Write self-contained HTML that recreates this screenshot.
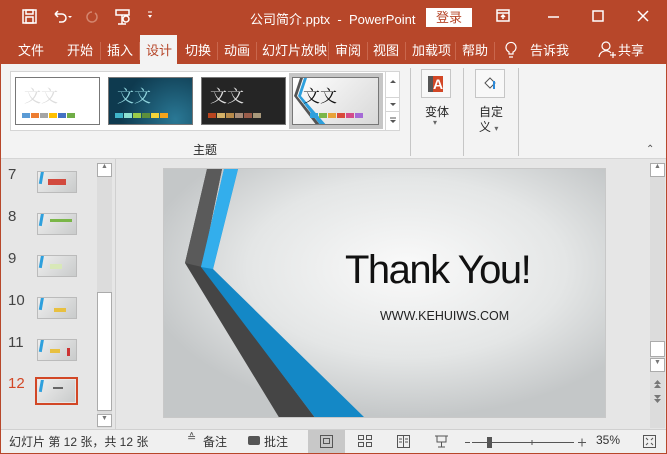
<!DOCTYPE html>
<html><head><meta charset="utf-8"><style>
*{margin:0;padding:0;box-sizing:border-box}
body{width:667px;height:454px;overflow:hidden;position:relative;background:#e6e6e6;font-family:"Liberation Sans","Noto Sans CJK SC",sans-serif;color:#262626}
.a{position:absolute}
.t{font-size:13px;color:#fff;white-space:nowrap}
.tab{position:absolute;top:40px;font-size:13px;color:#fff;white-space:nowrap}
.sep{position:absolute;top:42px;width:1px;height:18px;background:#c9674d}
.th{position:absolute;top:77px;height:48px;width:85px;border:1px solid #777}
.sw{position:absolute;bottom:6px;height:5px;width:8px}
.num{position:absolute;left:8px;font-size:15px;color:#444}
.thumb{position:absolute;left:37px;width:40px;height:22px;border:1px solid #bbb;background:linear-gradient(135deg,#eee,#c9cbcb);overflow:hidden}
.thumb:before{content:"";position:absolute;left:2px;top:-2px;width:3px;height:14px;background:#2ea0dd;transform:rotate(10deg)}
.sb{position:absolute;border:1px solid #ababab;background:#fff}
</style></head><body>
<div class="a" style="left:0;top:0;width:667px;height:64px;background:#b7472a"></div>
<svg class="a" style="left:0;top:0" width="667" height="34">
<g fill="none" stroke="#fff" stroke-width="1.5">
<rect x="23" y="10" width="13" height="13"/><rect x="26" y="10" width="7" height="4"/><rect x="26" y="17" width="7" height="6"/>
<path d="M55 14h7a4 4 0 0 1 0 8h-3M55 14l3-3M55 14l3 3"/>
<path d="M92 12a5 5 0 1 0 3 1" stroke="#d4866f"/>
<rect x="116" y="10" width="13" height="5"/><path d="M122 15v9M118 24h8"/><circle cx="126" cy="19" r="3"/>
<rect x="497" y="10" width="12" height="11"/><path d="M497 13h12M503 19v-4M501 17l2-2 2 2"/>
<path d="M548 17h11"/><rect x="593" y="11" width="10" height="10"/><path d="M638 11l10 10M648 11l-10 10"/>
</g>
<path d="M68 16l2 2 2-2z M148 15l2 3 2-3z" fill="#fff"/><path d="M148 12h4" stroke="#fff"/>
</svg>
<div class="a t" style="left:250px;top:9px">公司简介.pptx&nbsp; - &nbsp;PowerPoint</div>
<div class="a" style="left:426px;top:8px;width:46px;height:19px;background:#fff;color:#b7472a;font-size:13px;text-align:center;line-height:19px">登录</div>
<div class="a" style="left:140px;top:35px;width:37px;height:29px;background:#f3f3f3"></div>
<div class="tab" style="left:18px">文件</div>
<div class="tab" style="left:67px">开始</div><div class="sep" style="left:100px"></div>
<div class="tab" style="left:107px">插入</div><div class="sep" style="left:139px"></div>
<div class="tab" style="left:146px;color:#b7472a">设计</div>
<div class="tab" style="left:185px">切换</div><div class="sep" style="left:217px"></div>
<div class="tab" style="left:224px">动画</div><div class="sep" style="left:256px"></div>
<div class="tab" style="left:262px">幻灯片放映</div><div class="sep" style="left:328px"></div>
<div class="tab" style="left:335px">审阅</div><div class="sep" style="left:367px"></div>
<div class="tab" style="left:373px">视图</div><div class="sep" style="left:405px"></div>
<div class="tab" style="left:412px">加载项</div><div class="sep" style="left:455px"></div>
<div class="tab" style="left:462px">帮助</div><div class="sep" style="left:494px"></div>
<svg class="a" style="left:500px;top:40px" width="140" height="20"><g fill="none" stroke="#fff" stroke-width="1.2"><path d="M9 14v-2a5 5 0 1 1 4 0v2zM9 17h4"/><circle cx="106" cy="6" r="4"/><path d="M99 17a7 7 0 0 1 12-4M110 15h6M113 12v6"/></g></svg>
<div class="tab" style="left:530px">告诉我</div>
<div class="tab" style="left:618px">共享</div>
<div class="a" style="left:0;top:64px;width:667px;height:95px;background:#f3f3f3;border-bottom:1px solid #d5d5d5"></div>
<div class="a" style="left:10px;top:71px;width:390px;height:60px;border:1px solid #d5d5d5;background:#fff"></div>
<div class="th" style="left:15px;background:#fff"><span class="a" style="left:8px;top:4px;font-size:17px;color:#ddd;font-family:'Noto Serif CJK SC',serif">文文</span>
<i class="sw" style="left:6px;background:#5b9bd5"></i><i class="sw" style="left:15px;background:#ed7d31"></i><i class="sw" style="left:24px;background:#a5a5a5"></i><i class="sw" style="left:33px;background:#ffc000"></i><i class="sw" style="left:42px;background:#4472c4"></i><i class="sw" style="left:51px;background:#70ad47"></i></div>
<div class="th" style="left:108px;background:radial-gradient(circle at 80% 90%,#2a7895,#0e3a4f 70%)"><span class="a" style="left:8px;top:4px;font-size:17px;color:#8fd3dc;font-family:'Noto Serif CJK SC',serif">文文</span>
<i class="sw" style="left:6px;background:#3fb4c8"></i><i class="sw" style="left:15px;background:#8de0d0"></i><i class="sw" style="left:24px;background:#9ccc48"></i><i class="sw" style="left:33px;background:#5d8f3c"></i><i class="sw" style="left:42px;background:#f3d33a"></i><i class="sw" style="left:51px;background:#f4a41c"></i></div>
<div class="th" style="left:201px;background:#252525"><span class="a" style="left:8px;top:4px;font-size:17px;color:#ddd;font-family:'Noto Serif CJK SC',serif">文文</span>
<i class="sw" style="left:6px;background:#b8441e"></i><i class="sw" style="left:15px;background:#d4b066"></i><i class="sw" style="left:24px;background:#b88a4a"></i><i class="sw" style="left:33px;background:#a88c78"></i><i class="sw" style="left:42px;background:#9a5c4a"></i><i class="sw" style="left:51px;background:#a8987a"></i></div>
<div class="a" style="left:289px;top:73px;width:94px;height:56px;background:#c6c6c6"></div>
<div class="th" style="left:292px;width:87px;background:linear-gradient(135deg,#fff,#d8d8d8);overflow:hidden">
<svg class="a" style="left:0;top:0" width="87" height="48"><path d="M7 0h3L4 18 28 48h-4L1 18z" fill="#555"/><path d="M11 0h3L8 18 34 48h-6L5 18z" fill="#2ea0dd"/></svg>
<span class="a" style="left:10px;top:4px;font-size:17px;color:#111;font-family:'Noto Serif CJK SC',serif">文文</span>
<i class="sw" style="left:17px;background:#2ea0dd"></i><i class="sw" style="left:26px;background:#7ab648"></i><i class="sw" style="left:35px;background:#e8a33a"></i><i class="sw" style="left:44px;background:#d94a3a"></i><i class="sw" style="left:53px;background:#d44c8a"></i><i class="sw" style="left:62px;background:#a56ad6"></i></div>
<div class="a" style="left:385px;top:72px;width:14px;height:58px;border-left:1px solid #d5d5d5"></div>
<div class="a" style="left:385px;top:97px;width:14px;border-top:1px solid #d5d5d5"></div>
<div class="a" style="left:385px;top:111px;width:14px;border-top:1px solid #d5d5d5"></div>
<svg class="a" style="left:386px;top:72px" width="14" height="58"><path d="M4 11l3-3 3 3zM4 31l3 3 3-3zM4 48l3 3 3-3z" fill="#555"/><path d="M4 46h6" stroke="#555"/></svg>
<div class="a" style="left:410px;top:68px;width:1px;height:88px;background:#c6c6c6"></div>
<div class="a" style="left:463px;top:68px;width:1px;height:88px;background:#c6c6c6"></div>
<div class="a" style="left:518px;top:68px;width:1px;height:88px;background:#c6c6c6"></div>
<div class="a" style="left:421px;top:69px;width:30px;height:29px;border:1px solid #c6c6c6;background:#f8f8f8"></div>
<div class="a" style="left:428px;top:76px;width:15px;height:16px;background:#d24726;color:#fff;font-size:14px;font-weight:bold;line-height:16px;text-align:center;border-left:5px solid #555">A</div>
<div class="a" style="left:475px;top:69px;width:30px;height:29px;border:1px solid #c6c6c6;background:#f8f8f8"></div>
<svg class="a" style="left:482px;top:75px" width="16" height="16"><path d="M3 8l5-5 5 5-5 5z" fill="#fff" stroke="#555"/><path d="M12 6v8" stroke="#2e8ad8" stroke-width="2"/></svg>
<div class="a" style="left:425px;top:103px;font-size:12px">变体</div>
<div class="a" style="left:433px;top:118px;font-size:8px;color:#666">▾</div>
<div class="a" style="left:479px;top:103px;font-size:12px">自定</div>
<div class="a" style="left:479px;top:118px;font-size:12px">义 <span style="font-size:8px;color:#666">▾</span></div>
<div class="a" style="left:193px;top:141px;font-size:12px">主题</div>
<div class="a" style="left:646px;top:144px;font-size:10px;color:#555">⌃</div>
<div class="a" style="left:0;top:159px;width:116px;height:270px;background:#e6e6e6;border-right:1px solid #d0d0d0"></div>
<div class="num" style="top:166px">7</div><div class="thumb" style="top:171px"><i class="a" style="left:10px;top:7px;width:18px;height:6px;background:#d24a3e"></i></div>
<div class="num" style="top:208px">8</div><div class="thumb" style="top:213px"><i class="a" style="left:12px;top:5px;width:22px;height:3px;background:#7ab648"></i></div>
<div class="num" style="top:250px">9</div><div class="thumb" style="top:255px"><i class="a" style="left:12px;top:8px;width:12px;height:5px;background:#d8e8b8"></i></div>
<div class="num" style="top:292px">10</div><div class="thumb" style="top:297px"><i class="a" style="left:16px;top:10px;width:12px;height:4px;background:#e8c040"></i></div>
<div class="num" style="top:334px">11</div><div class="thumb" style="top:339px"><i class="a" style="left:12px;top:9px;width:10px;height:4px;background:#e8c040"></i><i class="a" style="left:29px;top:8px;width:3px;height:8px;background:#c33"></i></div>
<div class="num" style="top:375px;color:#d24726">12</div>
<div class="a" style="left:35px;top:377px;width:43px;height:28px;border:2px solid #d24726"></div>
<div class="thumb" style="left:38px;top:380px;width:37px;height:22px;border:none"><i class="a" style="left:15px;top:7px;width:10px;height:2px;background:#666"></i></div>
<div class="a" style="left:97px;top:163px;width:15px;height:265px;background:#dcdcdc"></div>
<div class="sb" style="left:97px;top:163px;width:15px;height:14px"></div><div class="a" style="left:101px;top:163px;font-size:7px;color:#777">▲</div>
<div class="sb" style="left:97px;top:292px;width:15px;height:119px"></div>
<div class="sb" style="left:97px;top:414px;width:15px;height:13px"></div><div class="a" style="left:101px;top:415px;font-size:7px;color:#777">▼</div>
<div class="a" style="left:163px;top:168px;width:443px;height:250px;border:1px solid #c8c8c8;background:radial-gradient(ellipse 60% 60% at 55% 40%,#fafafa,#e4e6e6 60%,#c4c7c8);overflow:hidden">
<svg class="a" style="left:0;top:0" width="443" height="250">
<path d="M43 0h15L38 98 152 250h-36L21 94z" fill="#454545"/><path d="M43 0h15L38 98 21 94z" fill="#5a5a5a"/>
<path d="M60 0h14L49 100 202 250h-50L37 98z" fill="#1488c6"/><path d="M60 0h14L49 100 37 98z" fill="#33aeec"/>
</svg>
<div class="a" style="left:181px;top:79px;font-size:40px;color:#111;letter-spacing:-1.5px;font-family:'Liberation Sans',sans-serif">Thank You!</div>
<div class="a" style="left:216px;top:140px;font-size:12.5px;color:#222">WWW.KEHUIWS.COM</div>
</div>
<div class="a" style="left:650px;top:163px;width:15px;height:265px;background:#dcdcdc"></div>
<div class="sb" style="left:650px;top:163px;width:15px;height:14px"></div><div class="a" style="left:654px;top:163px;font-size:7px;color:#777">▲</div>
<div class="sb" style="left:650px;top:341px;width:15px;height:16px"></div>
<div class="sb" style="left:650px;top:358px;width:15px;height:14px"></div><div class="a" style="left:654px;top:359px;font-size:7px;color:#777">▼</div>
<svg class="a" style="left:650px;top:376px" width="15" height="30"><path d="M4 8l3.5-4 3.5 4zM4 12l3.5-4 3.5 4zM4 19l3.5 4 3.5-4zM4 23l3.5 4 3.5-4z" fill="#777"/></svg>
<div class="a" style="left:0;top:429px;width:667px;height:25px;background:#f0f0f0;border-top:1px solid #d0d0d0"></div>
<div class="a" style="left:9px;top:433px;font-size:12px;color:#333">幻灯片 第 12 张，共 12 张</div>
<div class="a" style="left:187px;top:431px;font-size:11px;color:#555">≙</div>
<div class="a" style="left:203px;top:433px;font-size:12px;color:#333">备注</div>
<div class="a" style="left:248px;top:436px;width:12px;height:9px;background:#555;border-radius:2px"></div>
<div class="a" style="left:264px;top:433px;font-size:12px;color:#333">批注</div>
<div class="a" style="left:308px;top:430px;width:37px;height:24px;background:#c8c8c8"></div>
<svg class="a" style="left:300px;top:430px" width="360" height="24"><g fill="none" stroke="#555">
<rect x="20.5" y="5.5" width="12" height="12"/><rect x="23.5" y="8.5" width="6" height="5"/>
<rect x="58.5" y="5.5" width="5" height="4"/><rect x="66.5" y="5.5" width="5" height="4"/><rect x="58.5" y="12.5" width="5" height="4"/><rect x="66.5" y="12.5" width="5" height="4"/>
<rect x="97.5" y="5.5" width="12" height="12"/><path d="M103.5 5v13M99 9h3M99 12h3M105 9h3M105 12h3"/>
<path d="M135 6h13M137 6v6h9v-6M141.5 12v5M138 17h7"/>
<path d="M165 12.5h5M172 12.5h102M232 10v5M278 12.5h8M282 8.5v8"/>
<rect x="343.5" y="5.5" width="12" height="12"/><path d="M346 8l2 2M353 8l-2 2M346 15l2-2M353 15l-2-2"/></g>
<rect x="187" y="7" width="5" height="11" fill="#555"/></svg>
<div class="a" style="left:596px;top:433px;font-size:12px;color:#333">35%</div>
<div class="a" style="left:0;top:0;width:1px;height:454px;background:#b7472a"></div>
<div class="a" style="right:0;top:0;width:1px;height:454px;background:#b7472a"></div>
<div class="a" style="left:0;bottom:0;width:667px;height:1px;background:#b7472a"></div>
</body></html>
